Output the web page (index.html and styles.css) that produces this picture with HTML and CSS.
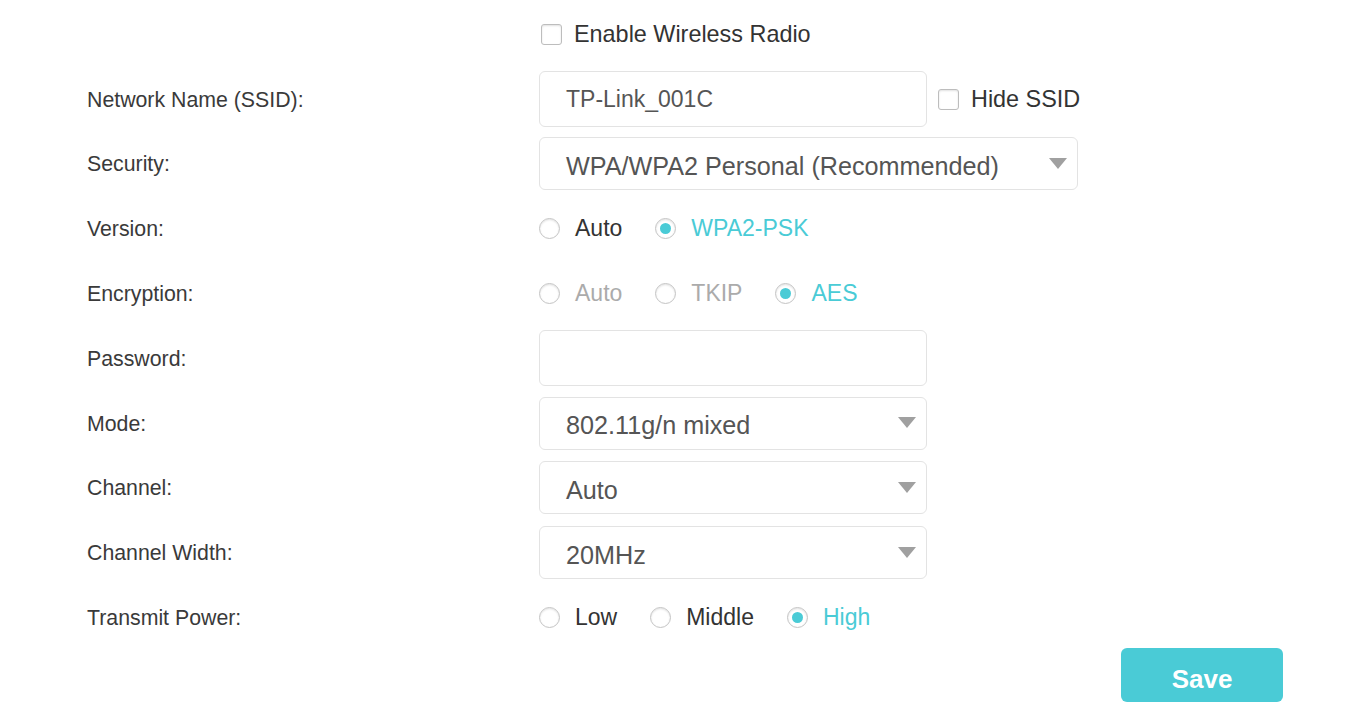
FILE: index.html
```html
<!DOCTYPE html>
<html>
<head>
<meta charset="utf-8">
<link rel="stylesheet" href="styles.css">
</head>
<body>
<div class="form">
  <div class="row">
    <div class="label"></div>
    <div class="control">
      <label class="check"><span class="box"></span><span class="text">Enable Wireless Radio</span></label>
    </div>
  </div>
  <div class="row">
    <div class="label">Network Name (SSID):</div>
    <div class="control">
      <div class="input tall">TP-Link_001C</div>
      <label class="check hide"><span class="box"></span><span class="text">Hide SSID</span></label>
    </div>
  </div>
  <div class="row">
    <div class="label">Security:</div>
    <div class="control">
      <div class="input select wide">WPA/WPA2 Personal (Recommended)<span class="arrow"></span></div>
    </div>
  </div>
  <div class="row">
    <div class="label">Version:</div>
    <div class="control radios">
      <span class="radio"><span class="dot"></span><span class="text">Auto</span></span>
      <span class="radio on"><span class="dot"></span><span class="text">WPA2-PSK</span></span>
    </div>
  </div>
  <div class="row">
    <div class="label">Encryption:</div>
    <div class="control radios">
      <span class="radio off"><span class="dot"></span><span class="text">Auto</span></span>
      <span class="radio off"><span class="dot"></span><span class="text">TKIP</span></span>
      <span class="radio on"><span class="dot"></span><span class="text">AES</span></span>
    </div>
  </div>
  <div class="row">
    <div class="label">Password:</div>
    <div class="control">
      <div class="input tall"></div>
    </div>
  </div>
  <div class="row">
    <div class="label">Mode:</div>
    <div class="control">
      <div class="input select">802.11g/n mixed<span class="arrow"></span></div>
    </div>
  </div>
  <div class="row">
    <div class="label">Channel:</div>
    <div class="control">
      <div class="input select">Auto<span class="arrow"></span></div>
    </div>
  </div>
  <div class="row">
    <div class="label">Channel Width:</div>
    <div class="control">
      <div class="input select">20MHz<span class="arrow"></span></div>
    </div>
  </div>
  <div class="row">
    <div class="label">Transmit Power:</div>
    <div class="control radios">
      <span class="radio"><span class="dot"></span><span class="text">Low</span></span>
      <span class="radio"><span class="dot"></span><span class="text">Middle</span></span>
      <span class="radio on"><span class="dot"></span><span class="text">High</span></span>
    </div>
  </div>
  <div class="footer">
    <button class="save">Save</button>
  </div>
</div>
</body>
</html>
```

FILE: styles.css
```css
html, body {
  margin: 0;
  padding: 0;
  background: #ffffff;
}
body {
  font-family: "Liberation Sans", Arial, sans-serif;
  color: #333333;
}
.form {
  padding-top: 2px;
  padding-left: 87px;
}
.row {
  display: flex;
  align-items: center;
  height: 64.8px;
}
.label {
  width: 452px;
  font-size: 21.3px;
  color: #3a3a3a;
  padding-top: 2px;
}
.control {
  display: flex;
  align-items: center;
  font-size: 23px;
}
.check {
  display: flex;
  align-items: center;
  gap: 12px;
  color: #333;
}
.check .text {
  font-size: 23.4px;
}
.check .box {
  width: 19px;
  height: 19px;
  border: 1.5px solid #bdbdbd;
  border-radius: 3px;
  box-shadow: inset 0 1px 2px rgba(0,0,0,0.12);
  margin-left: 2px;
}
.check.hide {
  margin-left: 9px;
}
.input {
  box-sizing: border-box;
  width: 388px;
  height: 53px;
  border: 1.5px solid #e3e3e3;
  border-radius: 6px;
  padding-left: 26px;
  display: flex;
  align-items: center;
  color: #555;
  position: relative;
}
.input.select {
  font-size: 25.2px;
  padding-top: 5px;
}
.input.tall {
  height: 56px;
}
.input.wide {
  width: 539px;
}
.arrow {
  position: absolute;
  right: 10px;
  top: 50%;
  margin-top: -6px;
  width: 0;
  height: 0;
  border-left: 9px solid transparent;
  border-right: 9px solid transparent;
  border-top: 11px solid #a0a0a0;
}
.radios {
  gap: 33px;
}
.radio {
  display: flex;
  align-items: center;
  gap: 15px;
  color: #333;
}
.radio .dot {
  box-sizing: border-box;
  width: 21px;
  height: 21px;
  border-radius: 50%;
  border: 1.5px solid #c4c4c4;
  box-shadow: inset 0 1px 2px rgba(0,0,0,0.12);
  display: flex;
  align-items: center;
  justify-content: center;
}
.radio.on .dot::after {
  content: "";
  width: 11px;
  height: 11px;
  border-radius: 50%;
  background: #4acbd6;
}
.radio.on .text {
  color: #4acbd6;
}
.radio.off .text {
  color: #ababab;
}
.footer {
  display: flex;
  justify-content: flex-end;
  padding-right: 84px;
  margin-top: -2px;
}
.save {
  width: 162px;
  height: 54px;
  border: none;
  border-radius: 6px;
  background: #4acbd6;
  color: #ffffff;
  font-family: "Liberation Sans", Arial, sans-serif;
  font-weight: bold;
  font-size: 26px;
  padding: 10px 0 0 0;
}
```
